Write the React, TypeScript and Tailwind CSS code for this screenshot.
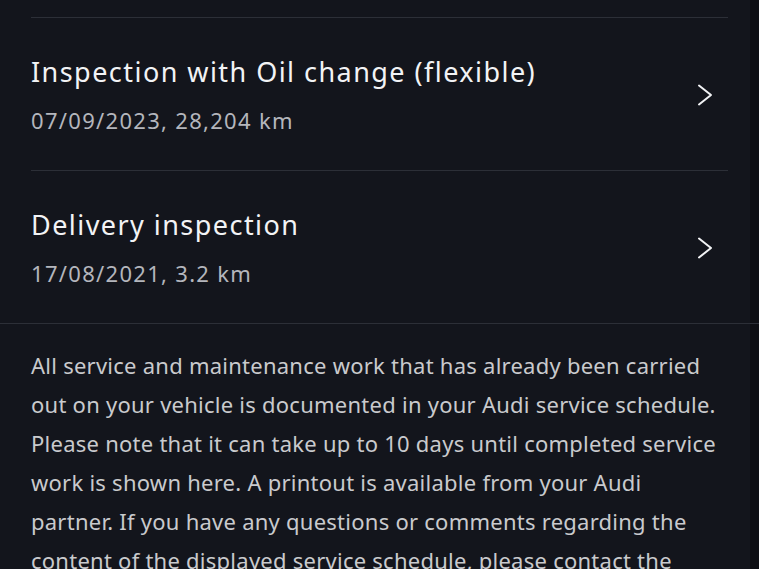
type Entry = {
  title: string;
  meta: string;
};

const entries: Entry[] = [
  { title: "Inspection with Oil change (flexible)", meta: "07/09/2023, 28,204 km" },
  { title: "Delivery inspection", meta: "17/08/2021, 3.2 km" },
];

// broken the same way the app wraps it on this screen width
const noteLines = [
  "All service and maintenance work that has already been carried",
  "out on your vehicle is documented in your Audi service schedule.",
  "Please note that it can take up to 10 days until completed service",
  "work is shown here. A printout is available from your Audi",
  "partner. If you have any questions or comments regarding the",
  "content of the displayed service schedule, please contact the",
  "Audi partner who carried out the work.",
];

const Chevron = () => (
  <svg width="16" height="22" viewBox="0 0 16 22" fill="none" className="mr-[15px]">
    <path d="M2 1.5 L14 11 L2 20.5" stroke="#f2f3f5" strokeWidth="2" strokeLinecap="round" strokeLinejoin="round" />
  </svg>
);

const ServiceRow = ({ title, meta }: Entry) => {
  return (
    <div className="flex items-center justify-between border-t border-[#2c2f37] pt-[36px] pb-[35px]">
      <div className="flex flex-col gap-[15px]">
        <p className="text-[27px] leading-[36px] tracking-[1.45px] text-[#f2f3f5]">{title}</p>
        <p className="text-[22px] leading-[30px] tracking-[1.3px] text-[#b4b6bc]">{meta}</p>
      </div>
      <Chevron />
    </div>
  );
};

const App = () => {
  return (
    <div
      className="h-screen overflow-hidden bg-[#13151c]"
      style={{ fontFamily: '"Noto Sans", "Open Sans", sans-serif' }}
    >
      <div className="flex">
        <div className="flex-1 pl-[31px] pr-[22px] pt-[17px]">
          {entries.map((e) => (
            <ServiceRow key={e.title} title={e.title} meta={e.meta} />
          ))}
        </div>
        <div className="w-[9px] bg-[#0d0e13]" />
      </div>
      <div className="flex border-t border-[#2c2f37]">
        <p className="flex-1 pl-[31px] pr-[22px] pt-[22px] text-[22px] leading-[39px] tracking-[0.25px] text-[#c9cacd]">
          {noteLines.map((line) => (
            <span key={line} className="block whitespace-nowrap">
              {line}
            </span>
          ))}
        </p>
        <div className="w-[9px] bg-[#0d0e13]" />
      </div>
    </div>
  );
};

export default App;
